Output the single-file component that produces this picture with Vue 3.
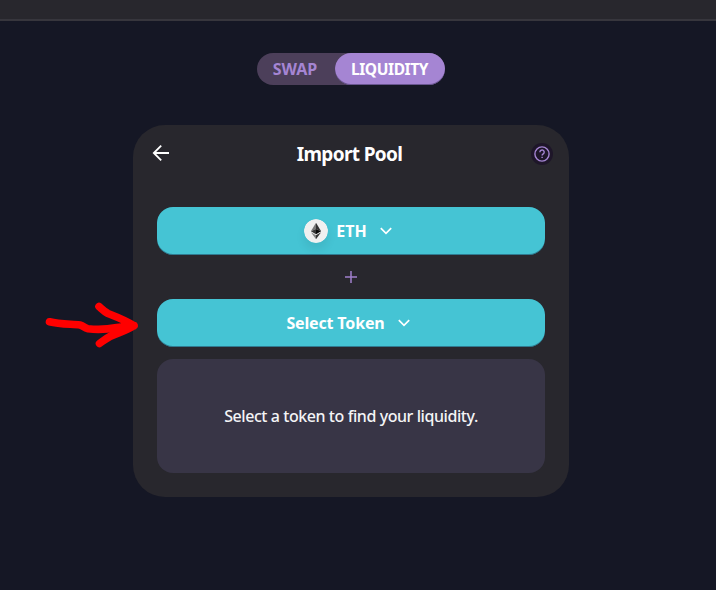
<script setup>
const tabs = [
  { label: 'SWAP', active: false },
  { label: 'LIQUIDITY', active: true },
]
</script>

<template>
  <div class="page">
    <header class="topbar"></header>
    <main class="content">
      <nav class="tabs">
        <button v-for="tab in tabs" :key="tab.label" class="tab" :class="{ active: tab.active }">
          <span>{{ tab.label }}</span>
        </button>
      </nav>
      <section class="card">
        <div class="card-head">
          <svg class="back" viewBox="0 0 18 18" width="18" height="18">
            <path d="M17 9H2M9.2 1.6L1.8 9l7.4 7.4" fill="none" stroke="#fff" stroke-width="1.8" />
          </svg>
          <h1 class="title">Import Pool</h1>
          <span class="help">
            <svg viewBox="0 0 22 22" width="22" height="22" fill="none" stroke="#a585d3" stroke-width="1.4">
              <circle cx="11" cy="11" r="7.1" />
              <path d="M8.9 9.2a2.15 2.15 0 1 1 3.5 1.6c-.8.6-1.3.9-1.3 1.8M11.1 13.8v1.3" />
            </svg>
          </span>
        </div>
        <button class="select">
          <svg class="eth" viewBox="0 0 24 24" width="24" height="24">
            <circle cx="12" cy="12" r="12" fill="#f0f0f0" />
            <path d="M12 3.8L6.9 12.2 12 10z" fill="#777" />
            <path d="M12 3.8l5.1 8.4L12 10z" fill="#333" />
            <path d="M6.9 12.2L12 10v5.2z" fill="#353535" />
            <path d="M17.1 12.2L12 10v5.2z" fill="#080808" />
            <path d="M6.9 13.3l5.1 3v3.9z" fill="#838383" />
            <path d="M17.1 13.3l-5.1 3v3.9z" fill="#333" />
          </svg>
          <span class="symbol">ETH</span>
          <svg class="chevron" viewBox="0 0 12 8" width="12" height="8">
            <path d="M.8 1.2L6 6.3l5.2-5.1" />
          </svg>
        </button>
        <div class="plus">
          <svg viewBox="0 0 12 12" width="12" height="12">
            <path d="M6 0v12M0 6h12" stroke="#a080cc" stroke-width="1.5" />
          </svg>
        </div>
        <button class="select">
          <span class="prompt">Select Token</span>
          <svg class="chevron" viewBox="0 0 12 8" width="12" height="8">
            <path d="M.8 1.2L6 6.3l5.2-5.1" />
          </svg>
        </button>
        <div class="notice"><span>Select a token to find your liquidity.</span></div>
      </section>
    </main>
    <svg class="pointer" viewBox="0 0 100 50" width="100" height="50">
      <path d="M8.5 21.8C19 24.5 31 24 39 25C43 26 43 28 47 28.8C57 30 66 29.5 76 27.5C83 26.5 88 26.5 93 25.7M93 25.7C84 20 76 17 67 13.5C63 11.5 61 9 58 6.5M93 25.7C85 31 77 33 69 36.5C65 38.5 62 41 58.5 43.5" />
    </svg>
  </div>
</template>

<style>
body {
  background: #151725;
}
</style>

<style scoped>
.page {
  position: relative;
  box-sizing: border-box;
  height: 590px;
  overflow: hidden;
  background: #151725;
  color: #fff;
  font-family: "Noto Sans", "Open Sans", sans-serif;
}
.topbar {
  box-sizing: border-box;
  height: 21px;
  background: #28272d;
  border-bottom: 2px solid #37363d;
}
.content {
  display: flex;
  flex-direction: column;
  align-items: center;
  width: 702px;
  padding-top: 32px;
}
button {
  margin: 0;
  border: 0;
  padding: 0;
  font-family: inherit;
  color: inherit;
}
.tabs {
  display: flex;
  height: 32px;
  border-radius: 16px;
  background: #4c3f5a;
}
.tab {
  width: 78px;
  height: 32px;
  padding-right: 2px;
  border-radius: 16px;
  background: transparent;
  color: #a585d3;
  font-size: 16px;
  font-weight: 700;
  line-height: 32px;
  white-space: nowrap;
  letter-spacing: -0.1px;
}
.tab.active {
  width: 110px;
  padding-right: 1px;
  font-size: 15.5px;
  letter-spacing: -0.4px;
  background: #a585d3;
  color: #fff;
  box-shadow: inset 0 -1px 0 rgba(14, 14, 44, 0.4);
}
.card {
  box-sizing: border-box;
  width: 436px;
  height: 372px;
  margin-top: 40px;
  padding: 0 24px;
  border-radius: 32px;
  background: #28272d;
}
.card-head {
  display: flex;
  align-items: center;
  justify-content: space-between;
  height: 58px;
  margin: 0 -8px 24px -5px;
}
.back {
  margin-bottom: 2px;
}
.title {
  margin: 0;
  padding-right: 2px;
  font-size: 19px;
  font-weight: 700;
  line-height: 30px;
  white-space: nowrap;
  letter-spacing: -0.65px;
}
.help {
  display: flex;
  width: 22px;
  height: 22px;
  border-radius: 50%;
  background: #1e1629;
}
.select {
  display: flex;
  align-items: center;
  justify-content: center;
  width: 388px;
  height: 48px;
  padding-right: 6px;
  border-radius: 16px;
  background: #45c4d4;
  box-shadow: inset 0 -1px 0 rgba(14, 14, 44, 0.4);
  font-size: 16px;
  font-weight: 700;
}
.prompt {
  letter-spacing: -0.15px;
}
.eth {
  margin-right: 8px;
  border-radius: 50%;
  box-shadow: 0 6px 10px rgba(0, 0, 0, 0.08);
}
.chevron {
  margin-left: 13px;
  fill: none;
  stroke: #fff;
  stroke-width: 1.7;
}
.plus {
  display: flex;
  align-items: center;
  justify-content: center;
  height: 44px;
}
.notice {
  display: flex;
  align-items: center;
  justify-content: center;
  height: 114px;
  margin-top: 12px;
  border-radius: 16px;
  background: #383546;
  color: #f4f4f6;
  font-size: 16px;
  font-weight: 500;
  white-space: nowrap;
  letter-spacing: -0.43px;
}
.pointer {
  position: absolute;
  left: 41px;
  top: 300px;
  fill: none;
  stroke: #f00;
  stroke-width: 7.6;
  stroke-linecap: round;
  stroke-linejoin: round;
}
</style>
